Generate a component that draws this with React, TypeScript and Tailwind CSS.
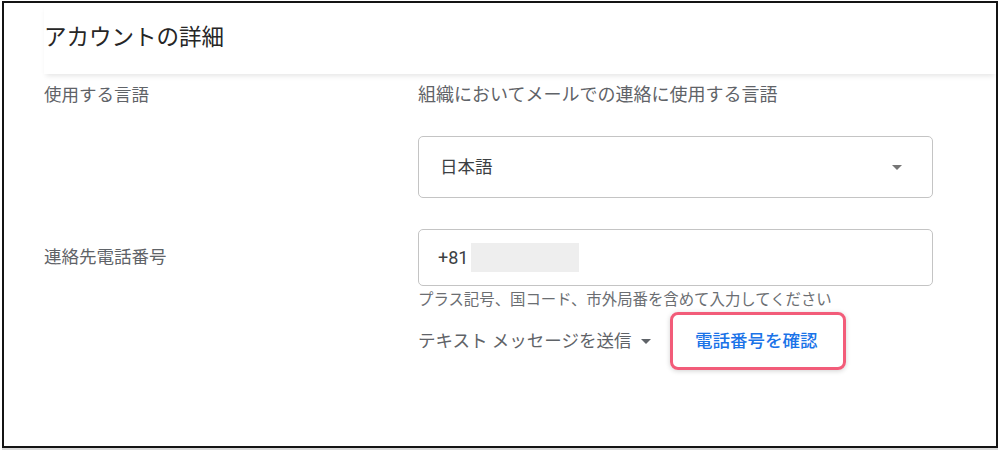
import React from "react"

const FONT = { fontFamily: '"Roboto", "Noto Sans CJK JP", sans-serif' }

function Caret({ className }: { className?: string }) {
  return (
    <svg viewBox="0 0 10 5" className={className} aria-hidden="true">
      <path d="M0 0h10L5 5z" fill="currentColor" />
    </svg>
  )
}

export default function App() {
  return (
    <div className="h-[452px] w-[1000px] bg-white" style={FONT}>
      <div className="ml-[2px] mt-[1px] h-[447px] w-[996px] overflow-hidden border-2 border-[#141414] bg-white shadow-[0_2px_0_#d9d9d9]">
        <div className="pl-[40px]">
          {/* header */}
          <div className="h-[71px] pt-[19px] shadow-[0_4px_5px_-2px_rgba(0,0,0,0.10)]">
            <h1 className="text-[22.5px] leading-[30px] font-normal text-[#262626]">
              アカウントの詳細
            </h1>
          </div>

          {/* language row */}
          <div className="mt-[9px] flex">
            <div className="w-[374px] shrink-0 text-[17.5px] leading-[24px] text-[#5f6368]">
              使用する言語
            </div>
            <div className="flex w-[515px] flex-col">
              <p className="text-[18px] leading-[24px] text-[#5f6368]">
                組織においてメールでの連絡に使用する言語
              </p>
              <div className="mt-[29px] flex h-[62px] items-center justify-between rounded-[5px] border border-[#c4c4c4] pl-[21px] pr-[30px]">
                <span className="text-[17.5px] text-[#3c4043]">日本語</span>
                <Caret className="h-[5px] w-[10px] text-[#757575]" />
              </div>
            </div>
          </div>

          {/* phone row */}
          <div className="mt-[31px] flex">
            <div className="flex h-[57px] w-[374px] shrink-0 items-center text-[17.5px] text-[#5f6368]">
              連絡先電話番号
            </div>
            <div className="flex w-[515px] flex-col">
              <div className="flex h-[57px] items-center rounded-[5px] border border-[#c4c4c4] pl-[19px]">
                <span className="text-[18px] text-[#3c4043]">+81</span>
                <span className="ml-[3px] h-[29px] w-[108px] bg-[#eeeeee]" />
              </div>
              <p className="mt-[4px] text-[15.4px] leading-[20px] text-[#6b6e72]">
                プラス記号、国コード、市外局番を含めて入力してください
              </p>
              <div className="mt-[2px] flex items-center">
                <div className="flex w-[252px] items-center gap-[10px] text-[17.5px] text-[#5f6368]">
                  <span>テキスト メッセージを送信</span>
                  <Caret className="h-[5px] w-[10px] text-[#5f6368]" />
                </div>
                <div className="flex h-[58px] w-[176px] items-center rounded-[8px] border-[3px] border-[#f25c79] pl-[22px] shadow-[0_1px_5px_rgba(0,0,0,0.18)]">
                  <span className="text-[17.5px] font-medium text-[#1a73e8]">電話番号を確認</span>
                </div>
              </div>
            </div>
          </div>
        </div>
      </div>
    </div>
  )
}
